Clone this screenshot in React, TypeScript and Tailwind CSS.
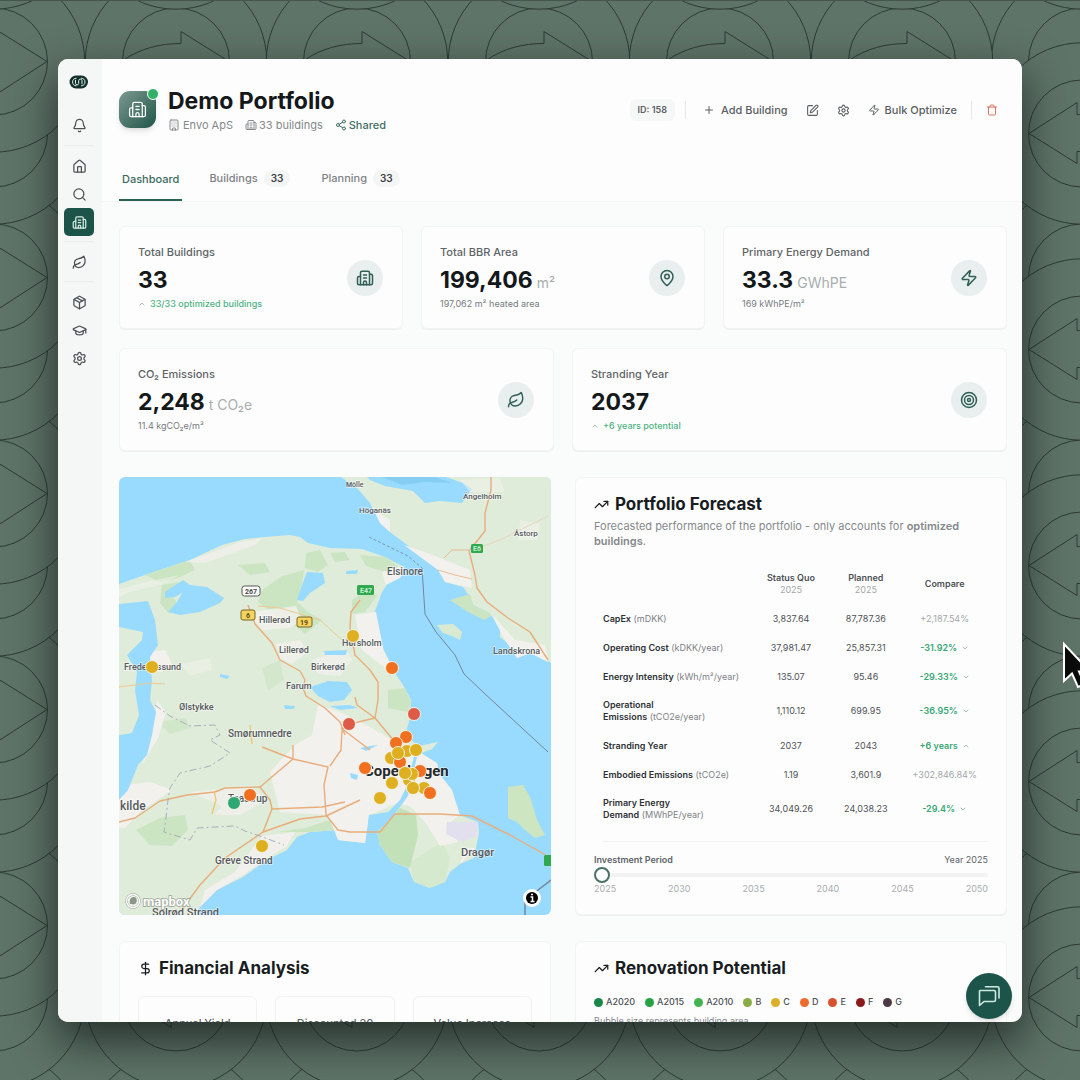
import {
  Bell,
  Building,
  Building2,
  ChevronDown,
  ChevronUp,
  DollarSign,
  GraduationCap,
  House,
  Leaf,
  MapPin,
  Package,
  Plus,
  Search,
  Settings,
  Share2,
  SquarePen,
  Target,
  Trash,
  TrendingUp,
  Zap,
} from 'lucide-react'
import type { LucideIcon } from 'lucide-react'
import { useState } from 'react'
import type { ReactNode } from 'react'

const navGroups: { label: string; icon: LucideIcon; active?: boolean }[][] = [
  [{ label: 'Notifications', icon: Bell }],
  [
    { label: 'Home', icon: House },
    { label: 'Search', icon: Search },
    { label: 'Portfolios', icon: Building2, active: true },
  ],
  [{ label: 'Sustainability', icon: Leaf }],
  [
    { label: 'Catalogue', icon: Package },
    { label: 'Academy', icon: GraduationCap },
    { label: 'Settings', icon: Settings },
  ],
]

type Trend = 'up' | 'down' | null

const forecastRows: { name: string; unit: string; now: string; planned: string; diff: string; trend: Trend }[] = [
  { name: 'CapEx', unit: '(mDKK)', now: '3,837.64', planned: '87,787.36', diff: '+2,187.54%', trend: null },
  { name: 'Operating Cost', unit: '(kDKK/year)', now: '37,981.47', planned: '25,857.31', diff: '-31.92%', trend: 'down' },
  { name: 'Energy Intensity', unit: '(kWh/m²/year)', now: '135.07', planned: '95.46', diff: '-29.33%', trend: 'down' },
  { name: 'Operational Emissions', unit: '(tCO2e/year)', now: '1,110.12', planned: '699.95', diff: '-36.95%', trend: 'down' },
  { name: 'Stranding Year', unit: '', now: '2037', planned: '2043', diff: '+6 years', trend: 'up' },
  { name: 'Embodied Emissions', unit: '(tCO2e)', now: '1.19', planned: '3,601.9', diff: '+302,846.84%', trend: null },
  { name: 'Primary Energy Demand', unit: '(MWhPE/year)', now: '34,049.26', planned: '24,038.23', diff: '-29.4%', trend: 'down' },
]

const energyLabels = [
  { label: 'A2020', dot: 'bg-[#17884a]' },
  { label: 'A2015', dot: 'bg-[#26a244]' },
  { label: 'A2010', dot: 'bg-[#43b24f]' },
  { label: 'B', dot: 'bg-[#8bab47]' },
  { label: 'C', dot: 'bg-[#dab02a]' },
  { label: 'D', dot: 'bg-[#ee6c2b]' },
  { label: 'E', dot: 'bg-[#d9502f]' },
  { label: 'F', dot: 'bg-[#8c1a1c]' },
  { label: 'G', dot: 'bg-[#4a3a45]' },
]

const YELLOW = '#deb01f'
const ORANGE = '#f0701f'
const RED = '#de5b46'
const GREEN = '#2ea773'

const markers: [number, number, string][] = [
  [353, 636, YELLOW],
  [152, 667, YELLOW],
  [392, 668, ORANGE],
  [349, 724, RED],
  [414, 714, RED],
  [406, 737, ORANGE],
  [396, 743, ORANGE],
  [407, 751, YELLOW],
  [416, 750, YELLOW],
  [391, 758, YELLOW],
  [400, 762, ORANGE],
  [398, 753, YELLOW],
  [365, 768, ORANGE],
  [420, 771, ORANGE],
  [409, 780, YELLOW],
  [412, 774, YELLOW],
  [405, 773, YELLOW],
  [392, 783, YELLOW],
  [380, 798, YELLOW],
  [424, 788, YELLOW],
  [413, 788, YELLOW],
  [430, 793, ORANGE],
  [250, 795, ORANGE],
  [234, 803, GREEN],
  [262, 846, YELLOW],
]

const places: [string, number, number, string][] = [
  ['Mölle', 346, 487, 'text-[7px]'],
  ['Ängelholm', 463, 499, 'text-[8px]'],
  ['Höganäs', 359, 513, 'text-[8px]'],
  ['Åstorp', 514, 536, 'text-[8px]'],
  ['Elsinore', 387, 575, 'text-[10px]'],
  ['Hillerød', 259, 623, 'text-[9px]'],
  ['Lillerød', 279, 653, 'text-[9px]'],
  ['Hørsholm', 342, 646, 'text-[9px]'],
  ['Birkerød', 311, 670, 'text-[9px]'],
  ['Frederikssund', 124, 670, 'text-[9px]'],
  ['Farum', 286, 689, 'text-[9px]'],
  ['Landskrona', 493, 654, 'text-[9px]'],
  ['Ølstykke', 179, 710, 'text-[9px]'],
  ['Smørumnedre', 228, 737, 'text-[10px]'],
  ['Taastrup', 228, 802, 'text-[10px]'],
  ['Greve Strand', 215, 864, 'text-[10px]'],
  ['Dragør', 461, 856, 'text-[11px]'],
  ['kilde', 120, 810, 'text-[12px]'],
  ['Solrød Strand', 152, 916, 'text-[11px]'],
]

function Backdrop() {
  const cols = [176, 357, 539, 720, 902]
  const left: number[] = []
  const rightBack: number[] = []
  const rightFront: number[] = []
  for (let n = 0; n < 5; n++) {
    left.push(61 + n * 216, 133 + n * 216)
    rightBack.push(61 + n * 216)
    rightFront.push(133 + n * 216)
  }
  const ring = (x: number, y: number) => (
    <g key={`${x}-${y}`}>
      <circle cx={x} cy={y} r="90.7" />
      <circle cx={x} cy={y} r="53.5" />
    </g>
  )
  const arrow = 'M-53 -1C-36 -13 -16 -18 5 -18V-30L53 0L5 31V19C-16 19 -36 13 -53 1'
  return (
    <svg
      aria-hidden="true"
      className="absolute inset-0 h-full w-full"
      viewBox="0 0 1080 1080"
      preserveAspectRatio="xMidYMid slice"
      fill="#5f7469"
      stroke="#2c3b34"
      strokeWidth="1"
    >
      {[-6, ...cols, 1082].map((x) => ring(x, 1141))}
      {rightBack.map((y) => ring(1082, y))}
      {rightFront
        .slice()
        .reverse()
        .map((y) => ring(1082, y))}
      {left
        .slice()
        .reverse()
        .map((y) => ring(-6, y))}
      {cols.map((x) => ring(x, 61))}
      {cols.map((x) => ring(x, 997))}
      {[-6, ...cols, 1082].map((x) => ring(x, -82))}
      {cols.map((x) => (
        <path key={x} d={arrow} transform={`translate(${x} 61)`} />
      ))}
      {cols.map((x) => (
        <path key={x} d={arrow} transform={`translate(${x} 997) rotate(180)`} />
      ))}
      {rightBack.map((y) => (
        <path key={y} d={arrow} transform={`translate(-6 ${y})`} />
      ))}
      {rightFront.map((y) => (
        <path key={y} d={arrow} transform={`translate(1082 ${y}) rotate(180)`} />
      ))}
    </svg>
  )
}

function Logo() {
  return (
    <svg width="20" height="14" viewBox="0 0 20 14" fill="none" aria-label="Envo" role="img">
      <rect x="0.5" y="0.5" width="18.500" height="13" rx="6.500" fill="#12302a" />
      <path
        d="M7.500 3.200C5 3.200 3.600 4.800 3.600 7C3.600 9.200 5 10.800 7.500 10.800M6.500 4.800V8.500C6.500 10.300 9.700 10.300 9.700 8.500V5.500C9.700 3.700 13 3.700 13 5.500V9.200M12 3.200C14.500 3.200 16 4.800 16 7C16 9.200 14.500 10.800 12 10.800"
        stroke="#dfeeea"
        strokeWidth="1"
      />
    </svg>
  )
}

function Sidebar() {
  return (
    <nav className="flex w-11 shrink-0 flex-col bg-[#f5f6f6] pr-2 pl-1.5">
      <a href="#" className="mt-4 mb-3 flex h-3.5 items-center justify-center">
        <Logo />
      </a>
      {navGroups.map((group, i) => (
        <div key={i} className={i === 0 ? 'pt-2.5 pb-1.5' : 'border-t border-[#ebeded] pt-1.5 pb-[5px]'}>
          {group.map(({ label, icon: Icon, active }) => (
            <button
              key={label}
              type="button"
              aria-label={label}
              className={
                active
                  ? 'flex h-7 w-[30px] items-center justify-center rounded-[5px] bg-[#1c5449] text-[#d4ece6]'
                  : 'flex h-7 w-[30px] items-center justify-center rounded-[5px] text-[#4b5154]'
              }
            >
              <Icon size={15} strokeWidth={2} />
            </button>
          ))}
        </div>
      ))}
    </nav>
  )
}

function Header() {
  return (
    <header className="border-b border-[#f2f4f4] bg-[#fdfdfd] pt-7 pr-[15px] pl-[17px]">
      <div className="flex items-center justify-between">
        <div className="flex items-center gap-3">
          <div className="relative mb-1 flex size-[37px] items-center justify-center rounded-[11px] bg-linear-to-br from-[#7b9a90] to-[#1f5548] text-white shadow-md">
            <Building2 size={19} strokeWidth={1.6} />
            <span className="absolute -top-[3px] -right-[3px] size-3 rounded-full border border-white bg-[#32b066]" />
          </div>
          <div>
            <h1 className="text-[23px] leading-7 font-bold text-[#14181a]">Demo Portfolio</h1>
            <div className="flex items-center gap-3 text-[11px] leading-5 text-[#85898c]">
              <span className="flex items-center gap-[3px]">
                <Building size={12} /> Envo ApS
              </span>
              <span className="flex items-center gap-0.5">
                <Building2 size={12} /> 33 buildings
              </span>
              <span className="flex items-center gap-0.5 font-medium text-[#3f6f63]">
                <Share2 size={12} /> Shared
              </span>
            </div>
          </div>
        </div>
        <div className="mb-0.5 flex items-center text-[11px] font-medium text-[#5a6063]">
          <span className="mr-2.5 rounded-md bg-[#f6f7f7] px-2 py-1 text-[9px] font-semibold">ID: 158</span>
          <span className="mr-[17px] h-[18px] w-px bg-[#e6e8e8]" />
          <button type="button" className="mr-[18px] flex items-center gap-1.5">
            <Plus size={12} /> Add Building
          </button>
          <button type="button" aria-label="Edit portfolio" className="mr-[18px]">
            <SquarePen size={13} />
          </button>
          <button type="button" aria-label="Portfolio settings" className="mr-[18px]">
            <Settings size={13} />
          </button>
          <button type="button" className="mr-3.5 flex items-center gap-[5px]">
            <Zap size={12} /> Bulk Optimize
          </button>
          <span className="mr-3.5 h-[18px] w-px bg-[#e6e8e8]" />
          <button type="button" aria-label="Delete portfolio" className="mr-[9px] text-[#dd7460]">
            <Trash size={12} />
          </button>
        </div>
      </div>
      <div role="tablist" className="mt-6 flex gap-[23px] text-[11px] font-medium text-[#7d8285]">
        <button
          type="button"
          role="tab"
          aria-selected="true"
          className="h-[42px] border-b-2 border-[#2c6154] px-[3px] text-[#3a6a5f]"
        >
          Dashboard
        </button>
        <button type="button" role="tab" aria-selected="false" className="flex h-[38px] items-center gap-1.5 px-1">
          Buildings <TabCount>33</TabCount>
        </button>
        <button type="button" role="tab" aria-selected="false" className="flex h-[38px] items-center gap-1.5 px-1">
          Planning <TabCount>33</TabCount>
        </button>
      </div>
    </header>
  )
}

function TabCount({ children }: { children: ReactNode }) {
  return (
    <span className="rounded-full bg-[#f4f5f5] px-[7px] py-px text-[10px] font-semibold text-[#3d4245]">
      {children}
    </span>
  )
}

function Card({ className, children }: { className?: string; children: ReactNode }) {
  return (
    <section className={`rounded-md border border-[#f2f4f4] bg-[#fdfdfd] shadow-2xs ${className ?? ''}`}>
      {children}
    </section>
  )
}

interface StatProps {
  label: ReactNode
  value: string
  unit?: ReactNode
  note: string
  positive?: boolean
  icon: LucideIcon
}

function StatCard({ label, value, unit, note, positive, icon: Icon }: StatProps) {
  return (
    <Card className="flex h-[103px] items-center justify-between pr-[19px] pl-[18px]">
      <div>
        <p className="h-4 text-[11px] leading-4 font-medium text-[#5f6467]">{label}</p>
        <p className="mt-1 flex h-8 items-baseline gap-1 text-[23px] leading-8 font-bold text-[#14181a]">
          {value}
          {unit && <span className="text-[14px] font-normal text-[#a9adb0]">{unit}</span>}
        </p>
        <p
          className={
            positive
              ? 'flex h-4 items-center gap-1 text-[9px] leading-4 font-medium text-[#4eb283]'
              : 'h-4 text-[9px] leading-4 text-[#777c7f]'
          }
        >
          {positive && <ChevronUp size={8} className="text-[#8a9a93]" />}
          {note}
        </p>
      </div>
      <span className="flex size-9 items-center justify-center rounded-full bg-[#e9eeee] text-[#2f6055]">
        <Icon size={18} strokeWidth={2} />
      </span>
    </Card>
  )
}

function RegionMap() {
  return (
    <section aria-label="Portfolio map" className="overflow-hidden rounded-md">
      <svg
        className="block h-full w-full font-['Roboto','Noto_Sans',sans-serif]"
        viewBox="119 477 432 438"
        preserveAspectRatio="xMidYMid slice"
      >
        <rect x="0" y="400" width="700" height="600" fill="#99dbff" />

        {/* Zealand */}
        <path
          fill="#dfecd9"
          d="M110 587L145 575L190 560L222 545L245 539L265 537L290 535L300 537L308 543L330 548L362 549L385 557L404 567L402 576L388 583L382 592L377 606L370 622L375 640L385 652L393 670L403 685L411 700L410 718L405 736L419 746L438 742L432 749L421 753L420 762L437 763L440 775L452 790L450 797L460 815L478 822L479 833L474 858L460 864L450 872L445 882L430 888L414 882L408 868L392 862L380 845L377 832L386 824L369 815L365 843L338 840L337 830L310 832L297 837L287 850L267 860L243 877L217 890L200 907L194 920H110Z"
        />
        {/* Skåne */}
        <path
          fill="#dfecd9"
          d="M341 477L358 489L370 503L380 523L390 532L410 547L433 563L441 573L445 582L463 587L470 597L473 605L493 615L500 627L500 637L510 645L517 658L530 653L560 667V470Z"
        />
        <path fill="#99dbff" d="M360 470L370 480L385 486L413 491L425 503L440 501L462 503L472 489L463 483L443 476Z" />
        <path fill="#86cdf4" d="M382 477H435L452 483L425 482L402 485Z" />
        <path fill="#d9ead1" d="M437 625L453 624L462 632L460 640L452 636L443 633Z" />
        <path fill="#cde6c1" d="M508 787L523 785L530 797L537 820L545 835L535 838L525 830L517 822L508 818Z" />

        {/* forests */}
        <g fill="#cbe5c3">
          <path d="M145 575L190 560L195 570L178 578L160 582Z" />
          <path d="M162 585L180 582L170 592L177 603L168 613L160 603Z" />
          <path d="M262 590L282 576L304 570L301 590L297 602L308 612L322 620L305 634L290 622L268 610L258 602Z" />
          <path d="M238 565L265 563L270 572L250 575Z" />
          <path d="M306 553L320 550L328 565L318 572L305 568Z" />
          <path d="M360 555L385 557L398 566L385 572L366 566Z" />
          <path d="M330 553L345 552L350 560L335 562Z" />
          <path d="M352 600L368 590L377 596L365 612L352 614Z" />
          <path d="M388 690L405 688L411 702L408 712L388 708Z" />
          <path d="M377 832L392 818L400 808L416 815L418 835L410 868L392 862L380 845Z" fill="#c3e1b8" />
          <path d="M136 830L160 818L185 815L188 830L172 846L150 845Z" />
          <path d="M278 832L305 828L330 820L337 830L310 832Z" />
          <path d="M450 600L470 594L473 605L493 615L484 620L468 612Z" />
          <path d="M158 722L186 718L190 728L170 734Z" opacity=".7" />
          <path d="M262 668L280 660L284 680L268 690Z" opacity=".6" />
          <path d="M410 862L442 842L450 858L445 882L430 888L414 882Z" opacity=".5" />
        </g>

        {/* built-up areas */}
        <g fill="#f3f1ee">
          <path d="M270 772L295 745L312 735L318 705L340 712L372 728L392 740L406 746L421 753L437 763L440 775L452 790L460 815L447 825L458 842L440 846L425 822L410 806L398 803L369 815L365 843L338 840L328 815L280 812Z" />
          <path d="M217 890L200 907L205 890L235 872L255 845L262 836L295 832L287 846L267 858L243 875Z" opacity=".9" />
          <path d="M190 792L250 786L268 800L240 815L214 815L222 806Z" opacity=".7" />
          <path d="M110 796L124 785L150 782L172 790L140 812L125 828H110Z" />
          <path d="M248 612L296 606L302 620L290 628L262 630Z" opacity=".8" />
          <path d="M276 644L300 640L308 652L292 664L280 658Z" opacity=".8" />
          <path d="M312 660L345 648L352 660L340 676L318 674Z" opacity=".7" />
          <path d="M355 615L376 612L384 652L396 672L385 668L362 650Z" />
          <path d="M382 572L404 566L400 578L386 585Z" />
          <path d="M404 545L433 555L470 570L472 588L445 582L438 570Z" />
          <path d="M490 612L515 640L545 645L548 662L530 653L517 658L505 640Z" />
          <path d="M374 510L390 520L390 532L380 523Z" />
          <path d="M145 652L165 650L172 664L160 672L148 668Z" />
          <path d="M157 700L166 712L158 738L142 765L152 735Z" />
          <path d="M180 575L160 585L130 592L119 598V589L145 582Z" opacity=".5" />
          <path d="M185 562L240 542L262 538L255 545L205 563Z" opacity=".7" />
          <path d="M475 848L460 864L466 848Z" />
          <path d="M180 664L210 658L212 670L190 676ZM460 480L500 478L505 492L470 492ZM520 520L540 524L538 540L518 540Z" opacity=".5" />
        </g>
        <path fill="#e2e0ee" d="M447 822L478 822L477 836L462 842L446 834Z" />

        {/* fjords and lakes */}
        <g fill="#99dbff">
          <path d="M110 605L148 601L155 620L158 645L150 657L152 680L150 700L156 712L152 735L147 755L138 765L128 790L119 800H110V737L132 733L139 715L135 690L137 672L127 655L142 640L143 632L110 625Z" />
          <path d="M165 592L183 580L190 585L207 587L224 598L220 603L200 612L180 615L168 612L177 602L182 593L175 597L165 598Z" />
          <path d="M307 572L323 573L325 583L310 593L303 601L297 600L302 585Z" />
          <path d="M310 687L328 681L347 682L352 690L344 700L330 702L318 696Z" />
          <path d="M324 651L347 650L346 655L325 655ZM284 705L295 706L294 709L285 709ZM220 674L230 676L227 679L220 677ZM346 571L358 570L357 574L346 574Z" />
          <path d="M330 706L350 705L358 708L340 710ZM360 748L370 746L378 745L366 751ZM350 773L358 775L357 780L351 778Z" />
          <path d="M369 815L388 812L400 800L406 788L410 772L414 756L417 757L412 778L408 796L396 812L384 826L368 826Z" />
        </g>

        {/* roads */}
        <g fill="none" stroke="#e8ad7b" strokeWidth="1.4" strokeLinejoin="round">
          <path d="M491 477V490L485 513V531L469 551L475 575L477 588L487 602L508 618L530 632L548 660" />
          <path d="M469 550H452L444 558" strokeWidth=".8" />
          <path d="M469 551L500 540L548 516" stroke="#e6d3bd" strokeWidth=".9" />
          <path d="M438 570L455 575L472 579" strokeWidth=".8" />
          <path d="M248 605L255 624L272 643L280 660L300 671L305 680L303 688L306 696L325 708L340 722L345 735" />
          <path d="M360 600L351 612L350 628L355 655L370 670L378 682L378 700L375 718L395 742" />
          <path d="M375 718L357 705L355 697M375 718L350 724L342 730L341 750L330 766" />
          <path d="M341 728L370 750" />
          <path d="M119 822L135 818L160 801L187 795L215 792L225 788L260 787L270 800L272 809L322 807L345 802" />
          <path d="M260 787L293 759L293 745M262 747L293 759L328 767L324 785L326 815L338 830L350 832L380 832L395 814L440 814L472 816L510 835L551 858" />
          <path d="M272 809L263 832L300 819L326 816L360 800" />
          <path d="M263 832L225 858L200 885L180 912" />
          <path d="M119 687L150 683L165 684M258 606L280 608L320 620L342 640" stroke="#ecc98f" strokeWidth="1" />
          <path d="M214 791L216 800L212 814M250 725L252 744" stroke="#f0c268" strokeWidth="1.2" />
        </g>

        {/* municipal and national borders */}
        <path
          d="M155 705L170 716L190 726L215 725L220 735L210 740L230 753L210 766L180 773L170 788L168 800L166 818L164 832L190 840L197 828L235 826L245 831L260 836L284 845"
          fill="none"
          stroke="#a9aebb"
          strokeWidth="1"
          strokeDasharray="7 3 2 3"
        />
        <path d="M369 537L408 556L422 568" fill="none" stroke="#73859a" strokeWidth=".8" strokeDasharray="3 2" />
        <path d="M422 568L425 614L436 632L455 655L464 674L484 693L548 752" fill="none" stroke="#73859a" strokeWidth="1" />
        <path d="M525 920V900L551 880" fill="none" stroke="#73859a" strokeWidth="1.5" />

        {/* road shields */}
        <g className="text-[7px] font-bold" textAnchor="middle">
          <rect x="242" y="586" width="18" height="10" rx="2.500" fill="#fff" stroke="#555" />
          <text x="251" y="594" fill="#444">267</text>
          <rect x="241" y="610" width="14" height="10" rx="2" fill="#f4d35e" stroke="#7a6525" />
          <text x="248" y="618" fill="#5a4a12">6</text>
          <rect x="297" y="617" width="15" height="10" rx="2" fill="#f4d35e" stroke="#7a6525" />
          <text x="304" y="625" fill="#5a4a12">19</text>
          <rect x="357" y="585" width="17" height="10" rx="1.500" fill="#2fa84f" />
          <text x="366" y="593" fill="#c9f0d2">E47</text>
          <rect x="471" y="544" width="12" height="9" rx="1.500" fill="#2fa84f" />
          <text x="477" y="551" fill="#c9f0d2">E6</text>
          <rect x="544" y="855" width="14" height="11" rx="1.500" fill="#2fa84f" />
        </g>

        <g fill="#55595c" stroke="#ffffff" strokeOpacity=".6" strokeWidth="1.500" paintOrder="stroke">
          {places.map(([name, x, y, size]) => (
            <text key={name} x={x} y={y} className={`${size} font-medium`}>
              {name}
            </text>
          ))}
          <text x="364" y="776" className="text-[15px] font-bold" fill="#26292b">
            Copenhagen
          </text>
        </g>

        {markers.map(([x, y, color]) => (
          <circle key={`${x}-${y}`} cx={x} cy={y} r="6.500" fill={color} stroke="#f6f3e6" strokeWidth="1" />
        ))}

        <g>
          <circle cx="133" cy="901" r="6.500" fill="#ffffff" fillOpacity=".5" stroke="#9aa39a" strokeWidth="2.500" />
          <circle cx="133" cy="901" r="6.500" fill="none" stroke="#ffffff" strokeWidth="1.500" />
          <path d="M130 904C129 899 131 897 134 897C137 897 138 902 135 904C133 905 131 904 130 904Z" fill="#8d958d" />
          <text x="143" y="906" className="text-[13px] font-bold" fill="#ffffff" stroke="#9aa39a" strokeWidth="1.500" paintOrder="stroke">
            mapbox
          </text>
          <circle cx="532" cy="898" r="9" fill="#ffffff" />
          <circle cx="532" cy="898" r="6" fill="#000000" />
          <path d="M530.500 897H532.500V901M530.500 901.500H534.500" stroke="#ffffff" strokeWidth="1.500" />
          <circle cx="532" cy="894.500" r="1" fill="#ffffff" />
        </g>
      </svg>
    </section>
  )
}

function CardTitle({ icon: Icon, children }: { icon: LucideIcon; children: ReactNode }) {
  return (
    <h2 className="flex items-center gap-1.5 text-[17px] leading-6 font-bold text-[#191d1f]">
      <Icon size={15} strokeWidth={2} />
      {children}
    </h2>
  )
}

function Compare({ diff, trend }: { diff: string; trend: Trend }) {
  if (!trend) return <span className="text-[#a4a8aa]">{diff}</span>
  const Chevron = trend === 'up' ? ChevronUp : ChevronDown
  return (
    <span className="inline-flex items-center gap-1 font-semibold text-[#3aa777]">
      {diff}
      <Chevron size={8} className="text-[#7fa998]" />
    </span>
  )
}

function ForecastCard() {
  const [year, setYear] = useState(2025)
  return (
    <Card className="px-[18px] pt-3.5 pb-[19px]">
      <CardTitle icon={TrendingUp}>Portfolio Forecast</CardTitle>
      <p className="mt-[3px] text-[11px] leading-[15px] text-[#85898c]">
        Forecasted performance of the portfolio - only accounts for{' '}
        <strong className="font-semibold">optimized buildings</strong>.
      </p>
      <table className="mt-[15px] w-full table-fixed text-[9px] leading-3 text-[#4d5255]">
        <colgroup>
          <col className="w-[40%]" />
          <col className="w-[20%]" />
          <col className="w-[18%]" />
          <col className="w-[22%]" />
        </colgroup>
        <thead>
          <tr className="h-10">
            <td />
            <th scope="col" className="font-semibold">
              Status Quo
              <span className="block font-normal text-[#a4a8aa]">2025</span>
            </th>
            <th scope="col" className="font-semibold">
              Planned
              <span className="block font-normal text-[#a4a8aa]">{year}</span>
            </th>
            <th scope="col" className="font-semibold">
              Compare
            </th>
          </tr>
        </thead>
        <tbody>
          {forecastRows.map((row) => (
            <tr key={row.name} className="h-[29px]">
              <th scope="row" className="py-2 pl-[9px] text-left font-semibold text-[#2d3235]">
                {/* the unit stays on the line of the last word */}
                {row.name}
                {row.unit && <span className="font-normal text-[#7d8285]">{`\u00a0${row.unit}`}</span>}
              </th>
              <td className="text-center">{row.now}</td>
              <td className="text-center">{row.planned}</td>
              <td className="text-center">
                <Compare diff={row.diff} trend={row.trend} />
              </td>
            </tr>
          ))}
        </tbody>
      </table>
      <div className="mt-3 ml-[9px] border-t border-[#f1f3f3]" />
      <div className="mt-3 flex justify-between text-[9px] leading-3 text-[#5f6467]">
        <label htmlFor="investment-period" className="font-semibold">
          Investment Period
        </label>
        <output htmlFor="investment-period">Year {year}</output>
      </div>
      <input
        id="investment-period"
        type="range"
        min={2025}
        max={2050}
        value={year}
        onChange={(e) => setYear(Number(e.target.value))}
        className="mt-px block h-4 w-full appearance-none bg-transparent [&::-webkit-slider-runnable-track]:h-1 [&::-webkit-slider-runnable-track]:rounded-full [&::-webkit-slider-runnable-track]:bg-[#f2f4f4] [&::-webkit-slider-thumb]:-mt-[6px] [&::-webkit-slider-thumb]:size-4 [&::-webkit-slider-thumb]:appearance-none [&::-webkit-slider-thumb]:rounded-full [&::-webkit-slider-thumb]:border-2 [&::-webkit-slider-thumb]:border-solid [&::-webkit-slider-thumb]:border-[#4c6f66] [&::-webkit-slider-thumb]:bg-white"
      />
      <div className="flex justify-between text-[9px] leading-3 text-[#a9adb0]">
        {[2025, 2030, 2035, 2040, 2045, 2050].map((tick) => (
          <span key={tick}>{tick}</span>
        ))}
      </div>
    </Card>
  )
}

function ChatButton() {
  return (
    <button
      type="button"
      aria-label="Open chat"
      className="absolute right-[10px] bottom-[3px] flex size-[46px] items-center justify-center rounded-full bg-[#1c5449] shadow-md"
    >
      <svg width="24" height="24" viewBox="0 0 24 24" fill="none" stroke="#cfe9e2" strokeWidth="1.600" strokeLinejoin="round" strokeLinecap="round">
        <path d="M3 6.500H17C17.800 6.500 18.500 7 18.500 8V16C18.500 17 18 17.500 17 17.500H7L2.500 21.500V7Z" />
        <path d="M8.500 2.800H20.500C21.500 2.800 22 3.300 22 4.300V14" />
      </svg>
    </button>
  )
}

export default function App() {
  return (
    <div className="relative h-screen overflow-hidden border-t border-[#46564e] bg-[#5f7469] px-[58px] pt-[58px] pb-[58px] font-[Inter,sans-serif]">
      <Backdrop />
      <div className="relative flex h-full overflow-hidden rounded-[10px] bg-[#fafbfb] shadow-[0_18px_44px_2px_rgba(20,28,24,0.75)]">
        <Sidebar />
        <div className="min-w-0 flex-1">
          <Header />
          <main className="pt-6 pr-[15px] pl-[17px]">
            <div className="grid grid-cols-3 gap-[18px]">
              <StatCard label="Total Buildings" value="33" note="33/33 optimized buildings" positive icon={Building2} />
              <StatCard label="Total BBR Area" value="199,406" unit="m²" note="197,062 m² heated area" icon={MapPin} />
              <StatCard label="Primary Energy Demand" value="33.3" unit="GWhPE" note="169 kWhPE/m²" icon={Zap} />
            </div>
            <div className="mt-[19px] grid grid-cols-2 gap-[18px]">
              <StatCard label="CO₂ Emissions" value="2,248" unit="t CO₂e" note="11.4 kgCO₂e/m²" icon={Leaf} />
              <StatCard label="Stranding Year" value="2037" note="+6 years potential" positive icon={Target} />
            </div>
            <div className="mt-[26px] grid grid-cols-2 gap-6">
              <RegionMap />
              <ForecastCard />
            </div>
            <div className="mt-[26px] grid grid-cols-2 gap-6">
              <Card className="px-[18px] pt-3.5 pb-6">
                <CardTitle icon={DollarSign}>Financial Analysis</CardTitle>
                <div className="mt-4 grid grid-cols-3 gap-[18px] text-center text-[11px] leading-4 font-medium text-[#5f6467]">
                  {['Annual Yield', 'Discounted 20', 'Value Increase'].map((label) => (
                    <div key={label} className="rounded-md border border-[#f0f2f2] px-2 pt-[18px] pb-8">
                      {label}
                    </div>
                  ))}
                </div>
              </Card>
              <Card className="px-[18px] pt-3.5 pb-6">
                <CardTitle icon={TrendingUp}>Renovation Potential</CardTitle>
                <ul className="mt-3.5 flex gap-2.5 text-[9px] leading-4 font-medium text-[#4d5255]">
                  {energyLabels.map(({ label, dot }) => (
                    <li key={label} className="flex items-center gap-[3px]">
                      <span className={`size-[9px] rounded-full ${dot}`} />
                      {label}
                    </li>
                  ))}
                </ul>
                <p className="mt-[3px] text-[9px] leading-4 text-[#85898c]">Bubble size represents building area</p>
              </Card>
            </div>
          </main>
        </div>
        <ChatButton />
      </div>
      <svg aria-hidden="true" className="absolute top-[640px] -right-2.5 h-[50px] w-[28px]" viewBox="0 0 28 50">
        <path d="M2 3V40L10 32.500L16 46L22.500 43L17 30.500H28Z" fill="#0a0a0a" stroke="#ffffff" strokeWidth="2" />
      </svg>
    </div>
  )
}
